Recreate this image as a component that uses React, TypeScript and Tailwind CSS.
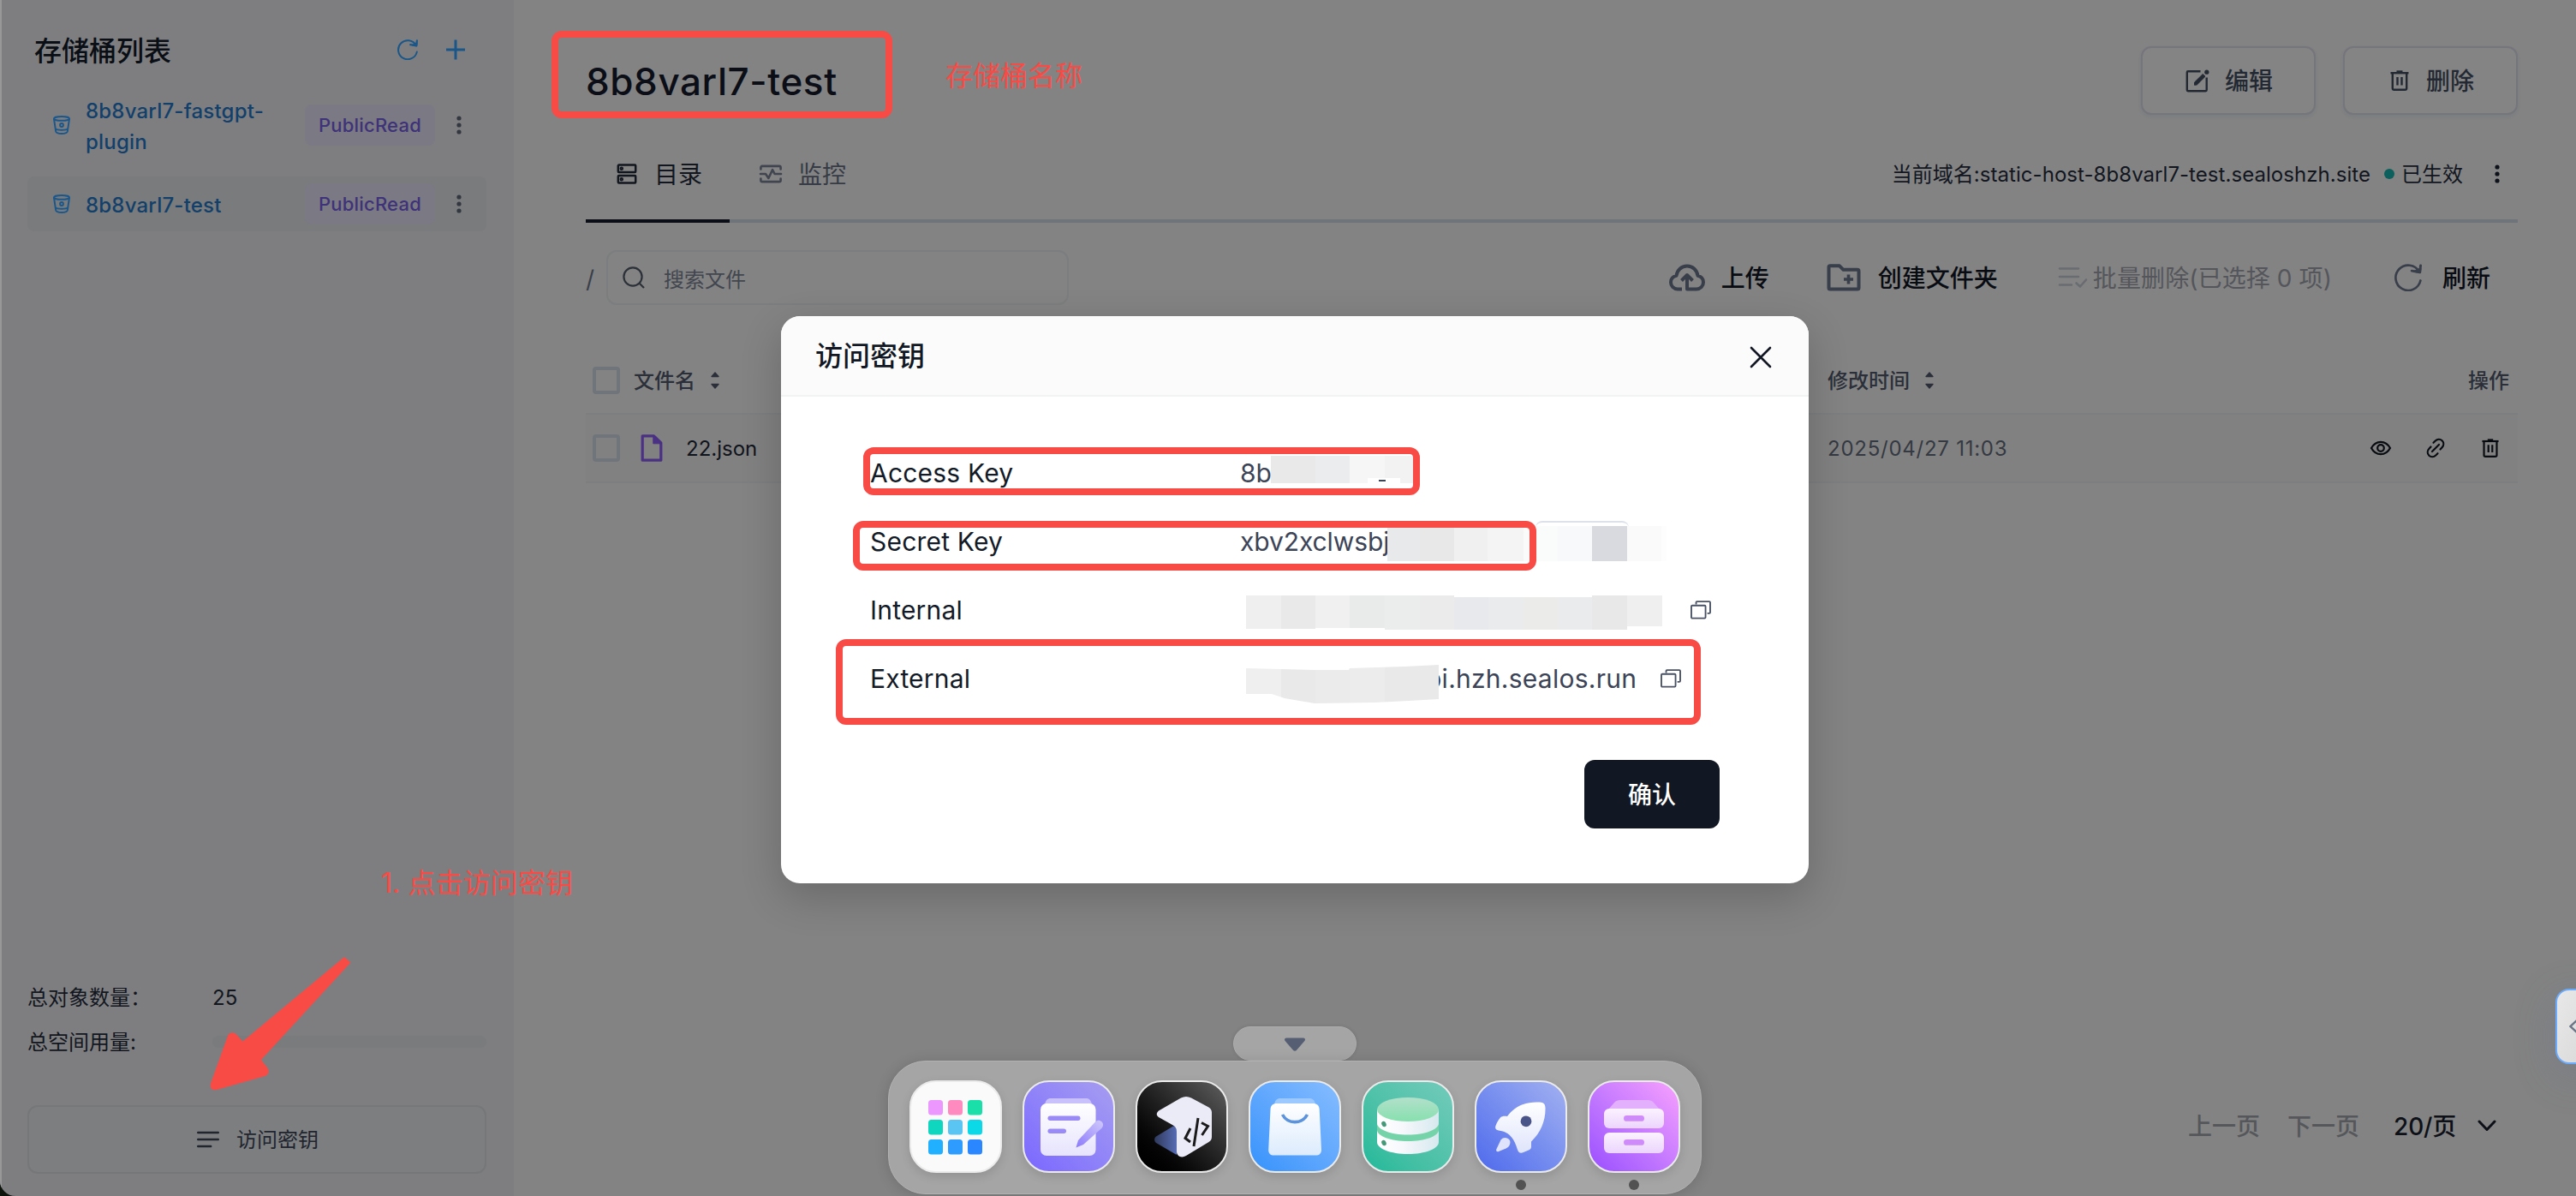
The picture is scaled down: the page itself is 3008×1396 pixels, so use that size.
import type { ReactNode } from "react";

type IconProps = { className?: string };

const RefreshIcon = ({ className = "" }: IconProps) => (
  <svg viewBox="0 0 24 24" className={className} fill="none" stroke="currentColor" strokeWidth="2" strokeLinecap="round" strokeLinejoin="round">
    <path d="M22.8 14.6A11 11 0 1 1 21.6 6.7" />
    <path d="M22.9 1.4 22.3 7.4 15.2 6.1" strokeWidth="2.2" />
    <path d="M22.6 4.4 22.2 7.2 18 6.6z" fill="currentColor" />
  </svg>
);

const BucketIcon = () => (
  <svg viewBox="0 0 20 22" className="h-[22px] w-5 shrink-0 text-[#1b578a]" fill="none" stroke="currentColor" strokeWidth="2">
    <ellipse cx="10" cy="3.4" rx="9" ry="2.4" />
    <path d="M1 3.6 3.2 18.4C3.6 20.3 6.6 21 10 21s6.400-.7 6.800-2.600L19 3.600" />
    <path d="M3 15.400c1.500 1.700 12.500 1.700 14 0" />
    <circle cx="10" cy="11" r="1.900" />
  </svg>
);

const DotsIcon = ({ className = "" }: IconProps) => (
  <svg viewBox="0 0 6 22" className={`h-[22px] w-1.5 shrink-0 ${className}`} fill="currentColor">
    <circle cx="3" cy="3" r="2.6" />
    <circle cx="3" cy="11" r="2.6" />
    <circle cx="3" cy="19" r="2.6" />
  </svg>
);

const TrashIcon = ({ className = "" }: IconProps) => (
  <svg viewBox="0 0 22 24" className={className} fill="none" stroke="currentColor" strokeWidth="2.4" strokeLinejoin="round">
    <path d="M.5 3.200h21" />
    <path d="M7.500 1.600h7" strokeWidth="2.600" />
    <path d="M2.800 3.200V21c0 1.200.7 1.800 1.800 1.800h12.800c1.100 0 1.800-.6 1.800-1.800V3.200" />
    <path d="M8.500 8v9.500M13.500 8v9.500" />
  </svg>
);

const EditIcon = () => (
  <svg viewBox="0 0 28 28" className="h-7 w-7" fill="none" stroke="currentColor" strokeWidth="2.400" strokeLinejoin="round">
    <path d="M17.500 3.200H3c-.7 0-1.200.5-1.200 1.200V25c0 .7.5 1.200 1.200 1.200h20.500c.7 0 1.200-.5 1.200-1.200V10.500" />
    <path d="M10.500 19.300v-3.200L20.200 6.500l2.800 2.800-9.600 9.600z" fill="currentColor" strokeWidth="1" />
    <circle cx="24.800" cy="4.200" r="2.600" fill="currentColor" stroke="none" />
  </svg>
);

const CopyIcon = () => (
  <svg viewBox="0 0 22 20" className="h-[22px] w-6 shrink-0 text-[#485264]" fill="none" stroke="currentColor" strokeWidth="1.700" strokeLinejoin="round">
    <rect x=".9" y="5.200" width="15.200" height="13.600" rx="1" />
    <path d="M6 4V2c0-.6.4-1.100 1-1.100h13.100c.6 0 1 .5 1 1.100v10.600c0 .6-.4 1-1 1H18" />
  </svg>
);

const SortIcon = () => (
  <svg viewBox="0 0 12 22" className="h-[22px] w-3" fill="currentColor">
    <path d="M6 1 10.500 6c.4.6.1 1.200-.6 1.200H2.100c-.7 0-1-.6-.6-1.200z" />
    <path d="M6 21 10.500 16c.4-.6.1-1.200-.6-1.200H2.100c-.7 0-1 .6-.6 1.200z" />
  </svg>
);

const buckets = [
  { name: "8b8varl7-fastgpt-plugin", active: false },
  { name: "8b8varl7-test", active: true },
];

function Sidebar() {
  return (
    <aside className="flex w-[600px] shrink-0 flex-col border-l-2 border-[#989898] bg-[#7e7e80] pb-[26px] pl-[30px] pr-8 pt-[34px]">
      <div className="flex h-12 items-center pl-2 pr-[25px]">
        <h2 className="flex-1 pt-[3px] text-[32px] font-medium leading-[48px] text-[#0a0e15]">存储桶列表</h2>
        <RefreshIcon className="h-6 w-6 text-[#1a5788]" />
        <svg viewBox="0 0 22 24" className="ml-[33px] h-6 w-[22px]" stroke="#1a5788" strokeWidth="3">
          <path d="M0 12h22M11 .5v23" />
        </svg>
      </div>
      <div className="mt-5 flex flex-col gap-4">
        {buckets.map((b) => (
          <div key={b.name} className={`flex items-center rounded-lg py-2 pl-[30px] pr-[29px] ${b.active ? "bg-[#797b7c]" : ""}`}>
            <BucketIcon />
            <span className="-mb-0.5 ml-[18px] w-[244px] pr-5 pt-0.5 text-2xl font-medium leading-9 tracking-[0.2px] text-[#12406b]">{b.name}</span>
            <span className="ml-3 flex h-12 w-[152px] items-center justify-center rounded-lg bg-[#7b7984] text-[22px] font-medium tracking-[0.2px] text-[#3e3278]">
              PublicRead
            </span>
            <DotsIcon className="ml-auto text-[#333840]" />
          </div>
        ))}
      </div>
      <div className="mt-auto text-2xl leading-[52px] text-[#12161e]">
        <div className="flex h-[52px] items-center">
          <span className="w-[216px] pt-0.5">总对象数量：</span>
          <span className="pt-0.5">25</span>
        </div>
        <div className="flex h-[52px] items-center">
          <span className="w-[216px] pt-0.5">总空间用量:</span>
          <span className="h-3.5 flex-1 rounded-full bg-[#797b7d]" />
        </div>
      </div>
      <button className="mt-[48px] flex h-20 items-center justify-center rounded-xl border-2 border-[#757779] bg-[#7d7e80] pl-0.5 text-2xl text-[#20252f]">
        <svg viewBox="0 0 26 22" className="mr-5 h-[22px] w-[26px]" stroke="currentColor" strokeWidth="2.400" strokeLinecap="round">
          <path d="M1.200 3h23.600M1.200 11h23.600M1.200 19h15" />
        </svg>
        <span className="pt-0.5">访问密钥</span>
      </button>
    </aside>
  );
}

function OutlineButton({ icon, label }: { icon: ReactNode; label: string }) {
  return (
    <button className="flex h-20 w-[204px] items-center justify-center rounded-xl border-2 border-[#75757c] bg-[#848484] pl-0.5 text-[28px] font-medium text-[#232933] shadow-[0_2px_4px_rgba(19,51,107,0.08)]">
      {icon}
      <span className="pt-0.5">{label}</span>
    </button>
  );
}

function Tabs() {
  return (
    <div className="mt-4 flex h-[110px] border-b-4 border-[#6f747a]">
      <div className="-mb-1 flex w-[168px] items-center border-b-4 border-[#0b0e17] pl-9 text-[28px] text-[#12161f]">
        <svg viewBox="0 0 24 24" className="mr-[20px] h-6 w-6" fill="none" stroke="currentColor" strokeWidth="2.500">
          <rect x="1.800" y="1.600" width="20.400" height="8.400" rx="1" />
          <rect x="1.800" y="14" width="20.400" height="8.400" rx="1" />
          <circle cx="5.800" cy="5.800" r="1" />
          <circle cx="5.800" cy="18.200" r="1" />
        </svg>
        <span className="pt-0.5">目录</span>
      </div>
      <div className="flex items-center pl-[34px] text-[28px] text-[#363b46]">
        <svg viewBox="0 0 28 24" className="mr-[18px] h-6 w-7" fill="none" stroke="#40454f" strokeWidth="2.600" strokeLinecap="round" strokeLinejoin="round">
          <path d="M2.400 6.500V4.500c0-1 .6-1.600 1.600-1.600h20c1 0 1.600.6 1.600 1.600v2M2.400 17.500v2c0 1 .6 1.600 1.600 1.600h20c1 0 1.600-.6 1.600-1.600v-2" />
          <path d="M2 12h6l3.400 5L16 7.200l2.600 4.800H26" />
        </svg>
        <span className="pt-0.5">监控</span>
      </div>
      <div className="ml-auto flex items-center pr-[21px] text-2xl text-[#12161f]">
        <span className="pt-0.5 tracking-[0.05px]">当前域名:static-host-8b8varl7-test.sealoshzh.site</span>
        <span className="ml-4 mr-2 h-3 w-3 rounded-full bg-[#0b5f5c]" />
        <span className="pt-0.5">已生效</span>
        <DotsIcon className="ml-[37px] text-[#0d1119]" />
      </div>
    </div>
  );
}

function Toolbar() {
  return (
    <div className="mt-8 flex h-16 items-center text-[28px] font-medium text-[#080c12]">
      <span className="w-6 pt-1 font-normal text-[#3a3f4a]">/</span>
      <div className="flex h-16 w-[540px] items-center rounded-xl border-2 border-[#7b7d7e] pl-[17px]">
        <svg viewBox="0 0 26 26" className="h-[26px] w-[26px]" fill="none" stroke="#2c3038" strokeWidth="2.200">
          <circle cx="12" cy="12" r="10.600" />
          <path d="m19.500 19.500 5.500 5.500" />
        </svg>
        <span className="ml-[22px] pt-[5px] text-2xl font-normal text-[#42464f]">搜索文件</span>
      </div>
      <div className="ml-auto flex items-center pr-8">
        <svg viewBox="0 0 42 32" className="h-8 w-[42px]" fill="none" stroke="#393f4a" strokeWidth="4" strokeLinecap="butt" strokeLinejoin="round">
          <path d="M15 29.500h-5C5.500 29.500 2 26 2 21.500c0-4 2.800-7 6.500-7.700C9.300 7.200 14.500 2.500 21 2.500s11.700 4.700 12.500 11.300c3.700.7 6.500 3.700 6.500 7.700 0 4.500-3.500 8-8 8H21V14" />
          <path d="m14.500 19.500 6.500-6.500 6.500 6.500" />
        </svg>
        <span className="ml-[19px] pt-0.5">上传</span>
        <svg viewBox="0 0 40 32" className="ml-[67px] h-8 w-10" fill="none" stroke="#393f4a" strokeWidth="4" strokeLinejoin="round">
          <path d="M2.500 4c0-1 .6-1.700 1.600-1.700H15l4.500 4.500h16.400c1 0 1.600.6 1.600 1.600V28c0 1-.6 1.600-1.600 1.600H4.100c-1 0-1.600-.6-1.600-1.600z" />
          <path d="M25.500 12.500v11M20 18h11" strokeWidth="3.600" />
        </svg>
        <span className="ml-5 pt-0.5">创建文件夹</span>
        <svg viewBox="0 0 36 26" className="ml-[70px] h-[26px] w-9" fill="none" stroke="#696c70" strokeWidth="2.600" strokeLinecap="round" strokeLinejoin="round">
          <path d="M2 2.500h22M2 12h22M2 21.500h14M21.500 19.500l4.500 4 7-8" />
        </svg>
        <span className="ml-[5px] pt-0.5 font-normal tracking-[0.1px] text-[#54565b]">批量删除(已选择 0 项)</span>
        <RefreshIcon className="ml-[73px] h-8 w-8 text-[#393f4a]" />
        <span className="ml-[24px] pt-0.5">刷新</span>
      </div>
    </div>
  );
}

const Checkbox = () => <span className="h-8 w-8 shrink-0 rounded border-4 border-[#70757b]" />;

function FileTable() {
  return (
    <div className="mt-[50px]">
      <div className="flex h-[78px] items-center border-b-2 border-[#7c7e80] pl-2 text-2xl font-medium text-[#2a2f39]">
        <Checkbox />
        <span className="ml-4 pt-0.5">文件名</span>
        <span className="ml-[17px]"><SortIcon /></span>
        <div className="ml-auto flex w-[806px] items-center pr-2.5">
          <span className="pt-0.5">修改时间</span>
          <span className="ml-[17px]"><SortIcon /></span>
          <span className="ml-auto pt-0.5">操作</span>
        </div>
      </div>
      <div className="flex h-20 items-center border-b-2 border-[#7c7e80] bg-[#818181] pl-2 text-2xl text-[#10141c]">
        <Checkbox />
        <svg viewBox="0 0 26 32" className="ml-6 h-8 w-[26px]" fill="none" stroke="#4a3184" strokeWidth="3.200" strokeLinejoin="round">
          <path d="M15.500 1.800H2.200v28.400h21.600V10z" />
          <path d="M14.800 1.500v9.300h9.400z" fill="#4a3184" strokeWidth="1" />
        </svg>
        <span className="ml-[27px] pt-0.5">22.json</span>
        <div className="ml-auto flex w-[806px] items-center pr-[22px] text-[#080b10]">
          <span className="pt-0.5 tracking-[0.75px] text-[#343942]">2025/04/27 11:03</span>
          <svg viewBox="0 0 26 20" className="ml-auto h-5 w-[26px]" fill="none" stroke="currentColor" strokeWidth="2.200">
            <path d="M2 10c2.600-4.700 6.500-7.200 11-7.200S21.400 5.300 24 10c-2.600 4.700-6.500 7.200-11 7.200S4.600 14.700 2 10z" />
            <circle cx="13" cy="10" r="3.800" />
          </svg>
          <svg viewBox="0 0 24 24" className="ml-[39px] h-6 w-6" fill="none" stroke="currentColor" strokeWidth="2.200" strokeLinecap="round">
            <path d="m8 16 8-8M9.500 5.800l2.300-2.300c2.300-2.200 5.700-2.200 7.800-.2 2.200 2.200 2.200 5.600 0 7.900L17.500 13.500M14.500 18.200l-2.300 2.300c-2.300 2.200-5.700 2.200-7.800.2-2.200-2.200-2.200-5.600 0-7.900L6.500 10.500" />
          </svg>
          <TrashIcon className="ml-[42px] h-[22px] w-5" />
        </div>
      </div>
    </div>
  );
}

function Main() {
  return (
    <main className="flex flex-1 flex-col bg-[#838383] pb-[54px] pl-[84px] pr-[68px] pt-[54px]">
      <div className="flex h-20 items-center gap-8">
        <h1 className="flex-1 pt-0.5 text-[44px] font-medium leading-[60px] tracking-[0.6px] text-[#0b0e16]">8b8varl7-test</h1>
        <OutlineButton icon={<span className="mr-[18px]"><EditIcon /></span>} label="编辑" />
        <OutlineButton icon={<TrashIcon className="ml-0.5 mr-5 h-6 w-[22px]" />} label="删除" />
      </div>
      <Tabs />
      <Toolbar />
      <FileTable />
      <div className="mt-auto flex h-14 items-center justify-end pr-[25px] text-[28px] font-medium text-[#0d1017]">
        <span className="pt-0.5 text-[#55575b]">上一页</span>
        <span className="ml-8 pt-0.5 text-[#55575b]">下一页</span>
        <span className="ml-10 pt-0.5 tracking-[-0.2px]">20/页</span>
        <svg viewBox="0 0 22 14" className="ml-[25px] h-3.5 w-[22px]" fill="none" stroke="currentColor" strokeWidth="3" strokeLinecap="round" strokeLinejoin="round">
          <path d="m2 2 9 9.500L20 2" />
        </svg>
      </div>
    </main>
  );
}

function KeyRow({ label, children }: { label: string; children?: ReactNode }) {
  return (
    <div className="flex h-20 items-center text-[30px] text-[#131b28]">
      <span className="w-[431px] tracking-[0.2px]">{label}</span>
      <div className="relative flex h-full flex-1 items-center text-[#3c4457]">{children}</div>
    </div>
  );
}

function Modal() {
  return (
    <div className="absolute left-[912px] top-[369px] flex h-[662px] w-[1200px] flex-col overflow-hidden rounded-[22px] bg-white">
      <div className="flex h-[94px] shrink-0 items-center border-b-2 border-[#f2f3f3] bg-[#fbfbfb] pl-10 pr-[43px]">
        <h3 className="flex-1 pt-0.5 text-[32px] font-medium text-[#111824]">访问密钥</h3>
        <svg viewBox="0 0 26 26" className="mt-1 h-[26px] w-[26px]" stroke="#111824" strokeWidth="2.600" strokeLinecap="round">
          <path d="m2 2 22 22M24 2 2 24" />
        </svg>
      </div>
      <div className="flex flex-1 flex-col pl-[104px] pr-[104px] pt-[49px]">
        <KeyRow label="Access Key">
          <span className="ml-px">8b</span>
          <div className="absolute left-[37px] top-5 flex h-8">
            <i className="w-[52px] bg-[#e9e9e9]" />
            <i className="w-10 bg-[#ebecee]" />
            <i className="w-[41px] bg-[#f6f6f6]" />
            <i className="w-[34px] bg-[#f2f2f2]" />
          </div>
          <span className="absolute left-[150px] top-[46px] flex h-1.5 w-[38px] bg-white pl-[13px] pt-0.5">
            <i className="h-0.5 w-2 bg-[#3c4457]" />
          </span>
        </KeyRow>
        <KeyRow label="Secret Key">
          <span className="ml-px tracking-[-0.1px]">xbv2xclwsbj</span>
          <div className="absolute left-[346px] top-4 h-11 w-[109px] rounded-t-lg border-t-2 border-[#dde1ea]" />
          <div className="absolute left-[173px] top-[22px] flex h-[41px]">
            <i className="h-[41px] w-[38px] bg-[#e8e9eb]" />
            <i className="w-10 bg-[#e8e8e8]" />
            <i className="w-[39px] bg-[#eff0ef]" />
            <i className="w-[42px] bg-[#f3f4f3]" />
            <i className="w-2 bg-[#fafafa]" />
            <i className="w-8 bg-[#fafbfb]" />
            <i className="w-10 bg-[#f7f9fb]" />
            <i className="w-[41px] bg-[#d9dae0]" />
            <i className="w-10 bg-[#fafafa]" />
            <i className="w-1.5 bg-[#fdfdfd]" />
          </div>
        </KeyRow>
        <KeyRow label="Internal">
          <div className="absolute left-2 top-[23px] flex h-10">
            <i className="mb-px w-[41px] bg-[#efefef]" />
            <i className="mb-px w-10 bg-[#e9e9e9]" />
            <i className="mb-0.5 w-10 bg-[#f0f0f0]" />
            <i className="mb-0.5 w-[41px] bg-[#e9ebea]" />
            <i className="w-[41px] bg-[#ebecec]" />
            <i className="w-10 bg-[#ebebeb]" />
            <i className="mt-0.5 w-10 bg-[#e7e9ec]" />
            <i className="mt-0.5 w-[41px] bg-[#e9ebec]" />
            <i className="mt-0.5 w-10 bg-[#ebebea]" />
            <i className="mt-0.5 w-10 bg-[#e9ebec]" />
            <i className="w-[41px] bg-[#e8e8e8]" />
            <i className="mb-1 w-[41px] bg-[#efefef]" />
          </div>
          <span className="ml-[527px]"><CopyIcon /></span>
        </KeyRow>
        <KeyRow label="External">
          <span className="ml-[218px] tracking-[0.25px]">pi.hzh.sealos.run</span>
          <div className="absolute left-2 top-[22px] flex h-[48px] [clip-path:polygon(0_6px,80px_8px,120px_8px,121px_6px,185px_4px,225px_2px,225px_42px,190px_44px,150px_46px,80px_47px,45px_41px,30px_36px,0_36px)]">
            <i className="w-[41px] bg-[#efefef]" />
            <i className="w-10 bg-[#e9e9e9]" />
            <i className="w-10 bg-[#ebebeb]" />
            <i className="w-[41px] bg-[#ebeceb]" />
            <i className="w-[63px] bg-[#e9e9e9]" />
          </div>
          <span className="ml-[28px]"><CopyIcon /></span>
        </KeyRow>
        <button className="ml-auto mt-[55px] flex h-20 w-[158px] items-center justify-center rounded-xl bg-[#111824] text-[28px] font-medium text-white">
          <span className="pt-0.5">确认</span>
        </button>
      </div>
    </div>
  );
}

const launcherTiles = ["#eb97fd", "#ff8abf", "#1adfa9", "#0fd6bf", "#5ac4f3", "#0bd9e8", "#21b0ff", "#2e9bff", "#2b87ff"];

const LauncherArt = () => (
  <g>
    {launcherTiles.map((c, i) => (
      <rect key={c} x={22 + (i % 3) * 23} y={23 + Math.floor(i / 3) * 23} width="17" height="17.500" rx="3.500" fill={c} />
    ))}
  </g>
);

const NoteArt = () => (
  <g>
    <path d="M26 28c1-4.500 3-7 7-7h41c4 0 6 2.500 7 7z" fill="#c9c1fc" />
    <rect x="21" y="27" width="64.500" height="61" rx="7" fill="url(#paper)" />
    <rect x="29.500" y="41.500" width="38" height="5.500" rx="2.700" fill="#9a8af8" />
    <rect x="29.500" y="56.500" width="21.500" height="5.500" rx="2.700" fill="#9a8af8" />
    <path d="M62.500 78.500 65 70l20-21.500c2.500-2.600 5.600-2 7.500-.2 1.900 2 2.300 5-.2 7.600L71 75z" fill="url(#pen)" />
  </g>
);

const DevboxArt = () => (
  <g>
    <path d="M44 53.500c3 0 4 1.500 4 5V87L24 73c-2.500-1.600-2.500-6 0-7.500z" fill="url(#fold)" />
    <path d="M53 20.500c4-2 8-2 12 0l20.500 11c2.500 1.500 3.500 3.500 3.500 6V66c0 2.500-1 4.500-3.500 6L59 88c-5 3-11 1-11-5V60c0-4-1.500-6-5-8L27 43c-3-2-3-5 0-7.500z" fill="#ebebf7" />
    <path d="m64 56-6 11.500 6 4.500M73 44l-5 33M77 49.500l7.500 4L77.500 64" fill="none" stroke="#1b1b1b" strokeWidth="3" />
  </g>
);

const StoreArt = () => (
  <g>
    <path d="M30 28c1-5 3-7 7-7h34c4 0 6 2 7 7z" fill="#9cc9ff" />
    <path d="M33 27h42c5 0 7.500 2.500 7.700 7L85 81c.2 4-2.500 6.500-6.500 6.500h-49c-4 0-6.500-2.500-6.300-6.500L25.500 34c.2-4.500 2.700-7 7.500-7z" fill="url(#bag)" />
    <path d="M39.500 40c3 5.500 8 8.600 14.500 8.600S65.500 45.500 68.500 40" fill="none" stroke="#5b93dd" strokeWidth="3.600" />
  </g>
);

const DatabaseArt = () => (
  <g>
    <path d="M18 56v16c0 8 16 14 36 14s36-6 36-14V56z" fill="url(#disk)" />
    <path d="M18 50v8c0 7 16 13 36 13s36-6 36-13v-8z" fill="#74d3a9" />
    <path d="M18 34v16c0 7.500 16 13.500 36 13.500S90 57.500 90 50V34z" fill="url(#disk)" />
    <ellipse cx="54" cy="34" rx="36" ry="14" fill="url(#lid)" />
    <ellipse cx="26" cy="51" rx="2.600" ry="3.400" fill="#439a78" transform="rotate(-25 26 51)" />
    <ellipse cx="26" cy="73" rx="2.600" ry="3.400" fill="#439a78" transform="rotate(-25 26 73)" />
  </g>
);

const RocketArt = () => (
  <g>
    <path d="M38 42c9-12 22-17.500 38-16.500 4.500.3 6.300 2 6.500 6.500.5 15-5.500 29-16.500 39.500v6c0 2-1 3-3 4l-6 2.500c-3.500 1.500-6 .5-7-3C47 70.500 42 60 28 58.500c-3.500-.4-4.500-2.500-3.500-5.500 1.500-4 3-6.500 5-9 2-2.300 5-2.300 8.500-2z" fill="url(#hull)" />
    <circle cx="60" cy="47.800" r="6.400" fill="#4b5488" />
    <path d="M30.500 69.500c3-4 8-3 10.500.5 1.500 4-1 8-4.500 9.500l-8.500 3.500c-2 .8-3.300-.5-2.700-2.500z" fill="#dfe3fb" />
  </g>
);

const StorageArt = () => (
  <g>
    <path d="M31 26c2-2.300 4-3 7-3h32c3 0 5 .7 7 3l7 8H24z" fill="#e3b0fd" />
    <rect x="19" y="33" width="70" height="23" rx="6" fill="url(#drawer)" />
    <rect x="19" y="61" width="70" height="24" rx="6" fill="url(#drawer)" />
    <rect x="42" y="41" width="24" height="6.800" rx="3.400" fill="#cf8bfa" />
    <rect x="42" y="69" width="24" height="6.800" rx="3.400" fill="#cf8bfa" />
  </g>
);

const apps = [
  { id: "launcher", bg: "bg-[#fafafa]", art: <LauncherArt />, open: false },
  { id: "note", bg: "bg-linear-to-tr from-[#7b66ff] to-[#a79df0]", art: <NoteArt />, open: false },
  { id: "devbox", bg: "bg-linear-to-tr from-[#000000] to-[#606060]", art: <DevboxArt />, open: false },
  { id: "store", bg: "bg-linear-to-tr from-[#3592fb] to-[#85bcff]", art: <StoreArt />, open: false },
  { id: "database", bg: "bg-linear-to-tr from-[#1cb999] to-[#72cbbb]", art: <DatabaseArt />, open: false },
  { id: "launchpad", bg: "bg-linear-to-tr from-[#4f69ec] to-[#a3b0f0]", art: <RocketArt />, open: true },
  { id: "storage", bg: "bg-linear-to-tr from-[#9a4dff] to-[#f8a0fd]", art: <StorageArt />, open: true },
];

function Dock() {
  return (
    <div className="absolute bottom-0.5 left-[1037px] flex w-[950px] flex-col items-center">
      <svg className="absolute h-0 w-0">
        <defs>
          <linearGradient id="paper" x2="0" y2="1"><stop stopColor="#fff" /><stop offset="1" stopColor="#e6e3fd" /></linearGradient>
          <linearGradient id="pen" x1="0" y1="1" x2="1" y2="0"><stop stopColor="#8b79fb" /><stop offset="1" stopColor="#cfc9fb" /></linearGradient>
          <linearGradient id="fold"><stop stopColor="#303a5c" /><stop offset="1" stopColor="#566cb4" /></linearGradient>
          <linearGradient id="bag" x2="0" y2="1"><stop stopColor="#fff" /><stop offset="1" stopColor="#dcebfd" /></linearGradient>
          <linearGradient id="disk"><stop stopColor="#fff" /><stop offset=".4" stopColor="#f7f8fc" /><stop offset="1" stopColor="#d6e9ee" /></linearGradient>
          <linearGradient id="lid" x2="0" y2="1"><stop stopColor="#b3e0cb" /><stop offset="1" stopColor="#86e0ae" /></linearGradient>
          <linearGradient id="hull" x2="0" y2="1"><stop stopColor="#fff" /><stop offset="1" stopColor="#dfe4fb" /></linearGradient>
          <linearGradient id="drawer" x2="0" y2="1"><stop stopColor="#fbf2ff" /><stop offset="1" stopColor="#ecd5fd" /></linearGradient>
        </defs>
      </svg>
      <div className="flex h-10 w-36 items-center justify-center rounded-full border border-[#adadad] bg-[#a5a5a5] shadow-[0_0_4px_rgba(0,0,0,0.12)]">
        <svg viewBox="0 0 24 16" className="mt-0.5 h-4 w-6" fill="#565e74">
          <path d="M2 .5h20c1.800 0 2.600 2 1.400 3.400l-9.600 11c-1 1-2.600 1-3.600 0L.6 3.900C-.6 2.500.2.5 2 .5z" />
        </svg>
      </div>
      <div className="flex h-[156px] w-full justify-between rounded-[44px] border border-[#b2b2b2] bg-[#a5a5a5] px-6 pt-[22px] shadow-[0_2px_16px_rgba(0,0,0,0.15)]">
        {apps.map((a) => (
          <div key={a.id} className="flex flex-col items-center">
            <div className={`h-[108px] w-[108px] overflow-hidden rounded-[31px] border-2 border-[#ebebeb] shadow-[0_4px_12px_rgba(0,0,0,0.12)] ${a.bg}`}>
              <svg viewBox="2 2 104 104" className="h-full w-full">{a.art}</svg>
            </div>
            {a.open && <span className="mt-2 h-3 w-3 rounded-full bg-[#525252]" />}
          </div>
        ))}
      </div>
    </div>
  );
}

function Annotations() {
  return (
    <>
      <div className="absolute left-[644px] top-9 h-[102px] w-[398px] rounded-xl border-8 border-[#f84b46]" />
      <div className="absolute left-[1008px] top-[522px] h-14 w-[650px] rounded-xl border-8 border-[#f84b46]" />
      <div className="absolute left-[996px] top-[608px] h-[58px] w-[798px] rounded-xl border-8 border-[#f84b46]" />
      <div className="absolute left-[976px] top-[746px] h-[100px] w-[1010px] rounded-xl border-8 border-[#f84b46]" />
      <span className="absolute left-[1104px] top-[65px] text-[32px] leading-[48px] text-[#f84b46]">存储桶名称</span>
      <span className="absolute left-[445px] top-[1007px] whitespace-nowrap text-[32px] leading-[48px] tracking-[0.1px] text-[#f84b46]">1. 点击访问密钥</span>
      <svg viewBox="240 1110 180 170" className="absolute left-[240px] top-[1110px] h-[170px] w-[180px]" fill="#f84b46">
        <path d="M402 1117 409.500 1123.500 305 1237 312 1246C315 1250 314 1254 309.500 1256L253 1272C248 1273.500 244.500 1270 246 1264.500L266 1209C267.500 1204.500 273 1204 276 1207.500L283.500 1215.500z" />
      </svg>
    </>
  );
}

export default function App() {
  return (
    <div className="relative flex h-[1396px] w-[3008px] overflow-hidden bg-[#0c140c] font-[Inter,'Noto_Sans_CJK_SC',sans-serif]">
      <div className="flex flex-1 overflow-hidden rounded-bl-[18px]">
        <Sidebar />
        <Main />
      </div>
      <div className="absolute left-[912px] top-[369px] h-[662px] w-[1200px] rounded-[22px] shadow-[0_16px_48px_rgba(0,0,0,0.2)]" />
      <Modal />
      <Dock />
      <div className="absolute -right-6 top-[1154px] flex h-[88px] w-12 items-center rounded-l-2xl border-2 border-[#6cacff] bg-linear-to-br from-[#e8e8e8] to-[#d8d8d8] pl-3.5 shadow-[0_12px_48px_rgba(90,110,140,0.3)]">
        <svg viewBox="0 0 12 20" className="h-5 w-3" fill="none" stroke="#6b7486" strokeWidth="2.400">
          <path d="m10.500 1.500-9 8.500 9 8.500" />
        </svg>
      </div>
      <Annotations />
    </div>
  );
}
